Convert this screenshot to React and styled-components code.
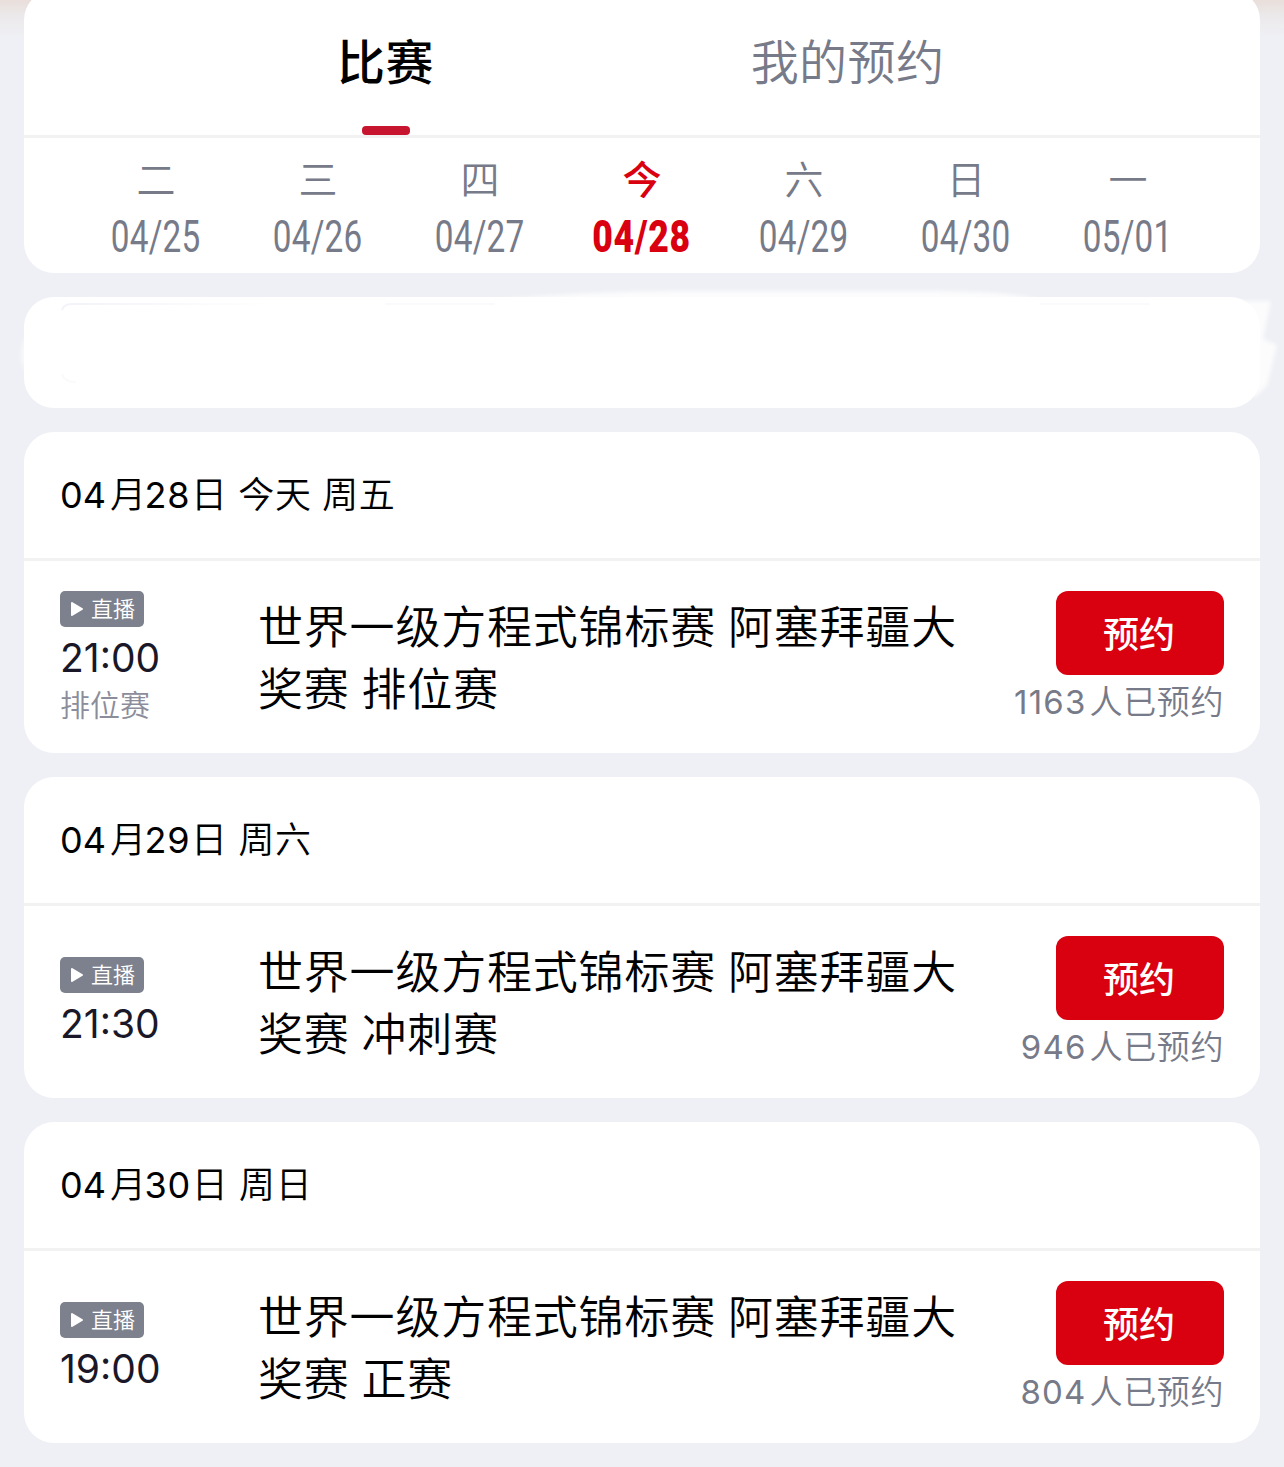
import React from "react";
import styled, { createGlobalStyle } from "styled-components";

const GlobalStyle = createGlobalStyle`
  * {
    box-sizing: border-box;
  }
  body {
    margin: 0;
    background-color: #eff0f5;
    font-family: Inter, "Noto Sans CJK SC", sans-serif;
  }
`;
const Page = styled.main`
  width: 1284px;
  height: 1467px;
  overflow: hidden;
  display: flex;
  flex-direction: column;
  gap: 24px;
  padding: 0 24px;
  background: linear-gradient(#e9deda 0, #ebe8e9 14px, #eff0f5 38px);
`;
const Card = styled.section`
  flex: none;
  background-color: white;
  border-radius: 30px;
`;
const HeaderCard = styled(Card)`
  height: 283px;
  margin-top: -10px;
  padding-top: 10px;
`;
const Tabs = styled.nav`
  height: 138px;
  display: flex;
  padding: 0 131px;
  border-bottom: 3px solid #f2f2f3;
`;
const Tab = styled.div`
  width: 462px;
  display: flex;
  flex-direction: column;
  align-items: center;
  justify-content: space-between;
  font-size: 48px;
  line-height: 70px;
  letter-spacing: 0.4px;
  padding-top: 28px;
  color: ${(props) => (props.$active ? "#000" : "#777a88")};
  font-weight: ${(props) => (props.$active ? 500 : 350)};
`;
const TabLabel = styled.span`
  margin-right: 1px;
`;
const Indicator = styled.span`
  width: 48px;
  height: 9px;
  border-radius: 4px;
  background-color: #c8152f;
`;
const Days = styled.div`
  display: flex;
  padding: 20px 51px 0;
`;
const Day = styled.div`
  width: 162px;
  display: flex;
  flex-direction: column;
  align-items: center;
  color: ${(props) => (props.$active ? "#d9000f" : "#777a88")};
`;
const Weekday = styled.span`
  font-size: 39px;
  line-height: 44px;
  font-weight: ${(props) => (props.$active ? 500 : 350)};
`;
const DayDate = styled.span`
  font-family: Roboto, sans-serif;
  font-size: 45px;
  line-height: 60px;
  margin-top: 5px;
  white-space: nowrap;
  font-weight: ${(props) => (props.$active ? 900 : 400)};
  letter-spacing: ${(props) => (props.$active ? "1px" : "0.3px")};
  transform: scaleX(${(props) => (props.$active ? 0.79 : 0.74)});
`;
const BlankCard = styled(Card)`
  position: relative;
  height: 111px;
`;
const Haze = styled.svg`
  position: absolute;
  left: -24px;
  top: -17px;
`;
const MatchCard = styled(Card)`
  height: 321px;
`;
const DateTitle = styled.h2`
  height: 129px;
  margin: 0;
  padding: 0 36px;
  border-bottom: 3px solid #f2f2f3;
  font-size: 36px;
  font-weight: 350;
  line-height: 127px;
  letter-spacing: 0.6px;
  color: #000;
`;
const Month = styled.span`
  margin-right: 4px;
  font-weight: 400;
  letter-spacing: 0;
`;
const DayOfMonth = styled.span`
  margin-left: -2px;
  margin-right: 1px;
  font-weight: 400;
`;
const Match = styled.div`
  height: 192px;
  display: flex;
  padding: 0 36px;
`;
const Info = styled.div`
  width: 198px;
  display: flex;
  flex-direction: column;
  align-items: flex-start;
  justify-content: center;
  padding-top: 4px;
`;
const Badge = styled.span`
  width: 84px;
  height: 36px;
  display: flex;
  align-items: center;
  gap: 7px;
  padding-left: 10px;
  border-radius: 5px;
  background-color: #7d818d;
  color: white;
  font-size: 22px;
  font-weight: 350;
  line-height: 36px;
`;
const Time = styled.span`
  font-size: 39px;
  line-height: 54px;
  margin-top: 4px;
  color: #1a1828;
`;
const Stage = styled.span`
  font-size: 30px;
  line-height: 44px;
  margin-top: -2px;
  font-weight: 350;
  color: #8b8d9b;
`;
const Name = styled.div`
  width: 720px;
  padding-top: 36px;
  font-size: 45px;
  font-weight: 350;
  line-height: 62px;
  letter-spacing: 0.8px;
  word-spacing: -1.5px;
  color: #000;
  white-space: pre-line;
`;
const Action = styled.div`
  flex: 1;
  display: flex;
  flex-direction: column;
  align-items: flex-end;
  padding-top: 30px;
`;
const Button = styled.button`
  width: 168px;
  height: 84px;
  padding: 0 2px 3px 0;
  border: none;
  border-radius: 12px;
  background-color: #d9000f;
  color: white;
  font-family: inherit;
  font-size: 36px;
  font-weight: 500;
`;
const Count = styled.span`
  font-size: 33px;
  line-height: 54px;
  font-weight: 350;
  letter-spacing: 0.6px;
  white-space: nowrap;
  color: #777a88;
`;
const CountNumber = styled.span`
  margin-right: 3px;
  font-weight: 400;
  letter-spacing: 1.2px;
`;

const days = [
  { week: "二", date: "04/25" },
  { week: "三", date: "04/26" },
  { week: "四", date: "04/27" },
  { week: "今", date: "04/28", active: true },
  { week: "六", date: "04/29" },
  { week: "日", date: "04/30" },
  { week: "一", date: "05/01" },
];

const matches = [
  { month: "04", day: "28", label: "今天 周五", time: "21:00", stage: "排位赛", name: "排位赛", count: 1163 },
  { month: "04", day: "29", label: "周六", time: "21:30", name: "冲刺赛", count: 946 },
  { month: "04", day: "30", label: "周日", time: "19:00", name: "正赛", count: 804 },
];

const PlayIcon = () => (
  <svg width="14" height="16" viewBox="0 0 14 16">
    <path d="M2 2 L12 8 L2 14 Z" fill="white" stroke="white" strokeWidth="2" strokeLinejoin="round" />
  </svg>
);

const App = () => {
  return (
    <>
      <GlobalStyle />
      <Page>
        <HeaderCard>
          <Tabs>
            <Tab $active>
              <TabLabel>比赛</TabLabel>
              <Indicator />
            </Tab>
            <Tab>
              <TabLabel>我的预约</TabLabel>
            </Tab>
          </Tabs>
          <Days>
            {days.map((day) => (
              <Day key={day.date} $active={day.active}>
                <Weekday $active={day.active}>{day.week}</Weekday>
                <DayDate $active={day.active}>{day.date}</DayDate>
              </Day>
            ))}
          </Days>
        </HeaderCard>
        <BlankCard>
          <Haze width="1284" height="140" viewBox="0 280 1284 140">
            <defs>
              <filter id="soft" x="-10%" y="-10%" width="120%" height="120%">
                <feGaussianBlur stdDeviation="2" />
              </filter>
              <linearGradient id="fade" gradientUnits="userSpaceOnUse" x1="62" x2="270" y1="0" y2="0">
                <stop offset="0" stopColor="#f2f2f9" />
                <stop offset="1" stopColor="#fff" />
              </linearGradient>
            </defs>
            <g filter="url(#soft)" fill="#fff">
              <path d="M490 300 Q600 290 700 291 H930 Q1010 291 1040 300 Z" opacity="0.8" />
              <path d="M1230 301 H1271 L1263 339 L1277 345 L1267 386 L1255 397 L1230 390 Z" opacity="0.8" />
              <path d="M26 335 Q17 357 26 372 Z" opacity="0.8" />
            </g>
            <path d="M62 310 Q64 304 72 304 H270" fill="none" stroke="url(#fade)" strokeWidth="2" />
            <path d="M62 374 Q64 382 76 382" fill="none" stroke="#fafafd" strokeWidth="2" />
            <path d="M385 304 H495 M1040 304 H1150" stroke="#fafafc" strokeWidth="2" />
          </Haze>
        </BlankCard>
        {matches.map((match) => (
          <MatchCard key={match.day}>
            <DateTitle>
              <Month>{match.month}</Month>月<DayOfMonth>{match.day}</DayOfMonth>日 {match.label}
            </DateTitle>
            <Match>
              <Info>
                <Badge>
                  <PlayIcon />
                  直播
                </Badge>
                <Time>{match.time}</Time>
                {match.stage && <Stage>{match.stage}</Stage>}
              </Info>
              <Name>{`世界一级方程式锦标赛 阿塞拜疆大\n奖赛 ${match.name}`}</Name>
              <Action>
                <Button>预约</Button>
                <Count>
                  <CountNumber>{match.count}</CountNumber>人已预约
                </Count>
              </Action>
            </Match>
          </MatchCard>
        ))}
      </Page>
    </>
  );
};

export default App;
